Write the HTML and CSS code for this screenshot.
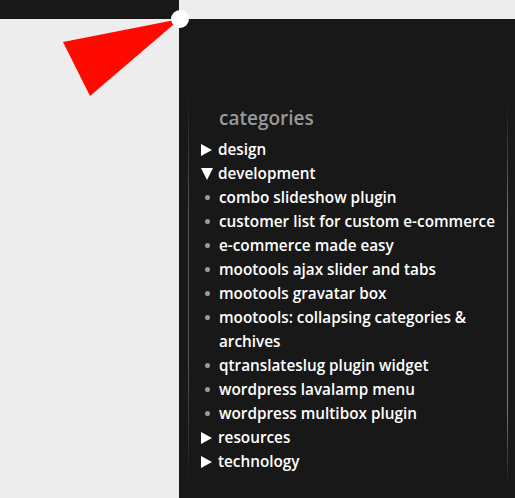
FILE: index.html
```html
<!DOCTYPE html>
<html>
<head>
<meta charset="utf-8">
<link rel="stylesheet" href="styles.css">
</head>
<body>
<div class="page">
  <div class="topbar"></div>
  <div class="topgap"></div>
  <div class="leftgap"></div>
  <div class="panel">
    <div class="widget">
      <h2 class="title">categories</h2>
      <ul class="cats">
        <li class="cat closed"><span class="tri right"></span>design</li>
        <li class="cat open"><span class="tri down"></span>development
          <ul class="posts">
            <li>combo slideshow plugin</li>
            <li>customer list for custom e-commerce</li>
            <li>e-commerce made easy</li>
            <li>mootools ajax slider and tabs</li>
            <li>mootools gravatar box</li>
            <li>mootools: collapsing categories &amp; archives</li>
            <li>qtranslateslug plugin widget</li>
            <li>wordpress lavalamp menu</li>
            <li>wordpress multibox plugin</li>
          </ul>
        </li>
        <li class="cat closed"><span class="tri right"></span>resources</li>
        <li class="cat closed"><span class="tri right"></span>technology</li>
      </ul>
    </div>
  </div>
</div>
<svg class="pointer" width="200" height="110" viewBox="0 0 200 110">
  <polygon points="63,42 180,19 90,96" fill="#ff0a00"/>
  <circle cx="180" cy="19" r="9" fill="#ffffff"/>
</svg>
</body>
</html>
```
FILE: styles.css
```css
html, body {
  margin: 0;
  padding: 0;
  background: #ededed;
}
.page {
  display: grid;
  grid-template-columns: 179px 336px;
  grid-template-rows: 19px 479px;
  width: 515px;
  height: 498px;
  overflow: hidden;
}
.topbar { background: #181818; }
.topgap { background: #ededed; }
.leftgap { background: #ededed; }
.panel {
  background: #181818;
  padding: 70px 7px 0 9px;
}
.widget {
  position: relative;
  padding: 17px 0 0 13px;
  height: 380px;
  font-family: "Open Sans", "Liberation Sans", sans-serif;
  color: #ffffff;
}
.widget::before,
.widget::after {
  content: "";
  position: absolute;
  top: 0;
  bottom: 0;
  width: 1px;
}
.widget::before {
  left: 0;
  background: linear-gradient(to bottom, rgba(90,90,90,0) 0%, rgba(90,90,90,0.9) 30%, rgba(90,90,90,0.9) 70%, rgba(90,90,90,0) 100%);
}
.widget::after {
  right: 0;
  top: 15px;
  background: linear-gradient(to bottom, rgba(130,130,130,0) 0%, rgba(130,130,130,0.9) 30%, rgba(130,130,130,0.9) 80%, rgba(130,130,130,0) 100%);
}
.title {
  margin: 0 0 7px 18px;
  font-size: 19px;
  font-weight: 600;
  color: #9a9a9a;
  line-height: 24px;
}
.cats, .posts {
  list-style: none;
  margin: 0;
  padding: 0;
}
.cat {
  font-size: 15.3px;
  font-weight: 600;
  line-height: 24px;
}
.tri {
  display: inline-block;
  width: 0;
  height: 0;
  vertical-align: -1px;
}
.tri.right {
  border-top: 6px solid transparent;
  border-bottom: 6px solid transparent;
  border-left: 11px solid #ffffff;
  margin-right: 6px;
}
.tri.down {
  border-left: 6px solid transparent;
  border-right: 6px solid transparent;
  border-top: 12px solid #ffffff;
  margin-right: 5px;
}
.posts li {
  position: relative;
  padding-left: 18px;
  padding-right: 6px;
}
.posts li::before {
  content: "";
  position: absolute;
  left: 4px;
  top: 10px;
  width: 5px;
  height: 5px;
  border-radius: 50%;
  background: #9a9a9a;
}
.pointer {
  position: absolute;
  left: 0;
  top: 0;
}
```
